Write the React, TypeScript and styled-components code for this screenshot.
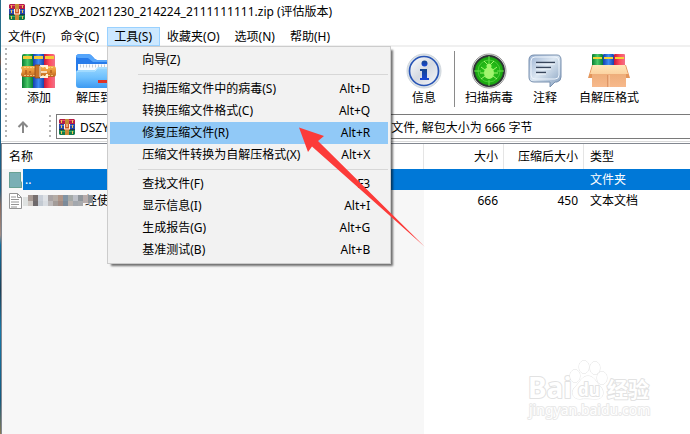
import React from "react";
import styled, { createGlobalStyle, css } from "styled-components";

const archiveName = "DSZYXB_20211230_214224_2111111111.zip";

const GlobalStyle = createGlobalStyle`
  * { box-sizing: border-box; }
  body { margin: 0; background: #fff; }
  body, button, input, table {
    font-family: "Noto Sans", "Noto Sans CJK SC", sans-serif;
    font-size: 12px;
    line-height: 16px;
    color: #000;
  }
  button { border: 0; padding: 0; background: none; white-space: nowrap; }
`;

const Desktop = styled.div`
  position: relative;
  display: flex;
  min-height: 100vh;
  overflow: hidden;
`;

const Wallpaper = styled.div`
  flex: none;
  width: 1px;
  background: linear-gradient(#2a6f8c 0 50px, #7c5a4c 62px, #1b5f86 72px 190px, #8a6a5c 205px, #a08c84 235px, #0f6fa0 245px, #1b4058 290px, #1878a8 330px, #135a80 400px, #8a7a50);
`;

const AppWindow = styled.main`
  flex: 1;
  min-width: 0;
  display: flex;
  flex-direction: column;
  background: #fff;
`;

const TitleBar = styled.header`
  display: flex;
  align-items: center;
  gap: 5px;
  height: 27px;
  padding: 0 8px 4px;
`;

const Title = styled.h1`
  margin: 0;
  font-size: 12px;
  font-weight: 400;
  white-space: nowrap;
`;

const MenuBar = styled.nav`
  display: flex;
  height: 19px;
  box-shadow: inset 0 -1px #f0f0f0;
`;

const MenuSlot = styled.div`
  position: relative;
`;

const MenuTitle = styled.button<{ $open?: boolean }>`
  height: 19px;
  padding: 0 8px 0 7px;
  ${(p) =>
    p.$open &&
    css`
      background: #cce8ff;
      box-shadow: inset 0 0 0 1px #99d1ff;
    `}
`;

const DropDown = styled.div`
  position: absolute;
  z-index: 2;
  top: 100%;
  left: 0;
  width: 284px;
  padding: 2px;
  background: #f2f2f2;
  border: 1px solid #ccc;
  box-shadow: 3px 3px 2px -1px rgba(0, 0, 0, 0.55);
`;

const MenuItem = styled.button<{ $active?: boolean }>`
  display: flex;
  align-items: center;
  justify-content: space-between;
  width: 100%;
  height: 22px;
  padding: 0 18px 0 32px;
  background: ${(p) => (p.$active ? "#91c9f7" : "transparent")};
`;

const MenuRule = styled.hr`
  height: 1px;
  margin: 3px 0 3px 28px;
  border: 0;
  background: #d7d7d7;
`;

const ToolBar = styled.div`
  display: flex;
  height: 66px;
  padding: 0 4px;
  border-top: 1px solid #f0f0f0;
`;

const Grip = styled.div`
  flex: none;
  width: 2px;
  margin: 1px 0 2px;
  background: repeating-linear-gradient(#b4b4b4 0 2px, transparent 2px 5px);
`;

const ToolButton = styled.button<{ $width: number }>`
  display: flex;
  flex: none;
  flex-direction: column;
  align-items: center;
  gap: 1px;
  width: ${(p) => p.$width}px;
  padding-top: 6px;
`;

const ToolGroup = styled.div`
  display: flex;
  flex: none;
  width: 390px;
  padding-left: 5px;
`;

const ToolRule = styled.div`
  flex: none;
  width: 1px;
  margin: 4px 4px 5px 3px;
  background: #8a8a8a;
`;

const AddressRow = styled.div`
  display: flex;
  height: 30px;
  padding: 2px 0 2px 4px;
  border-bottom: 1px solid #dadada;
`;

const UpButton = styled.button`
  display: flex;
  align-items: center;
  justify-content: center;
  width: 42px;
  padding-right: 10px;
`;

const AddressField = styled.label`
  display: flex;
  flex: 1;
  align-items: center;
  gap: 5px;
  margin-left: 5px;
  padding: 0 2px;
  border: 1px solid #7a7a7a;
  border-right: 0;
`;

const AddressInput = styled.input`
  flex: 1;
  min-width: 0;
  padding: 2px 0 0;
  border: 0;
  outline: 0;
`;

const FileList = styled.section`
  flex: 1;
  margin-top: 1px;
  border-top: 1px solid #828790;
  border-left: 1px solid #828790;
  background: linear-gradient(90deg, #f7f7f7 422px, #fff 422px);
`;

const FileTable = styled.table`
  width: 100%;
  table-layout: fixed;
  border-collapse: collapse;
`;

const Column = styled.col<{ $width?: number }>`
  width: ${(p) => (p.$width ? p.$width + "px" : "auto")};
`;

const HeadCell = styled.th<{ $numeric?: boolean }>`
  height: 25px;
  padding: 0 6px;
  font-weight: 400;
  text-align: ${(p) => (p.$numeric ? "right" : "left")};
  background: linear-gradient(#e5e5e5, #e5e5e5) right top / 1px 100% no-repeat #fff;
  &:first-child { padding-left: 7px; }
  &:last-child { background: #fff; }
`;

const Cell = styled.td<{ $numeric?: boolean; $selected?: boolean }>`
  height: 21px;
  padding: 0 6px;
  text-align: ${(p) => (p.$numeric ? "right" : "left")};
  ${(p) => p.$selected && css`background: #0078d7; color: #fff;`}
`;

const NameCell = styled.td`
  height: 21px;
  padding: 0;
`;

const NameContent = styled.div<{ $selected?: boolean }>`
  display: flex;
  align-items: center;
  height: 21px;
  padding-left: 7px;
  ${(p) => p.$selected && css`background: linear-gradient(90deg, #f7f7f7 21px, #0078d7 21px); color: #fff;`}
`;

const NameText = styled.span`
  padding-left: 2px;
`;

const Mosaic = styled.svg`
  position: relative;
  flex: none;
  margin-right: -12px;
`;

const Pointer = styled.svg`
  position: absolute;
  z-index: 3;
  left: 298px;
  top: 126px;
  pointer-events: none;
`;

const Watermark = styled.svg`
  position: absolute;
  right: 38px;
  bottom: 12px;
  pointer-events: none;
`;

const BooksMark = () => (
  <svg width="16" height="16" viewBox="0 0 16 16" aria-hidden="true">
    <path d="M1 0h14l1 1v4H1L0 4V1z" fill="#b51d48" />
    <path d="M1 1h14v1H1z" fill="#e8506f" />
    <path d="M0 5h16v5H0z" fill="#2848a8" />
    <path d="M1 6h14v1H1z" fill="#5377d8" />
    <path d="M0 11h16v4l-1 1H1l-1-1z" fill="#13784a" />
    <path d="M1 12h14v1H1z" fill="#36ac69" />
    <path d="M0 10h16v1H0z" fill="#26324f" />
    <path d="M2 1h1v3H2zM13 1h1v3h-1zM2 6h1v3H2zM13 6h1v3h-1zM2 12h1v3H2zM13 12h1v3h-1z" fill="#f1c84b" />
    <path d="M6 0h4v5H6zM6 11h4v5H6z" fill="#c98b35" />
    <path d="M5 5h6v6H5z" fill="#cf5a29" />
    <path d="M5.500 5v5h5V5" fill="none" stroke="#fff6e0" />
    <path d="M8 5v3" stroke="#fff6e0" />
  </svg>
);

const AddIcon = () => (
  <svg width="36" height="36" viewBox="0 0 36 36" aria-hidden="true">
    <defs>
      <linearGradient id="addGreen"><stop stopColor="#087b31" /><stop offset=".5" stopColor="#48c967" /><stop offset="1" stopColor="#087c35" /></linearGradient>
      <linearGradient id="addBlue"><stop stopColor="#153eb0" /><stop offset=".5" stopColor="#3e8bf2" /><stop offset="1" stopColor="#1742ad" /></linearGradient>
      <linearGradient id="addRed"><stop stopColor="#c9163b" /><stop offset=".5" stopColor="#ff4c5c" /><stop offset="1" stopColor="#f0708a" /></linearGradient>
      <linearGradient id="belt" x2="0" y2="1"><stop stopColor="#f4b64e" /><stop offset=".45" stopColor="#e8963a" /><stop offset="1" stopColor="#b8621d" /></linearGradient>
    </defs>
    <path d="M1 3q0-2 2-2h9v34H1z" fill="url(#addGreen)" />
    <path d="M12 1h11v34H12z" fill="url(#addBlue)" />
    <path d="M23 1h9q2 0 2 2v32H23z" fill="url(#addRed)" />
    <path d="M2 3h9v3H2zM13 3h9v3h-9zM24 3h9v3h-9z" fill="#f4cb38" />
    <path d="M3 13h29q3 0 3 3v5q0 3-3 3H3q-3 0-3-3 2-4 0-6 0-2 3-2z" fill="url(#belt)" />
    <path d="M3 14.500h29M3 22.500h29" stroke="#ffd98a" strokeWidth=".8" strokeDasharray="2 1" />
    <path d="M14 12h5v13h-5z" fill="#c87328" stroke="#8a4716" strokeWidth=".8" />
    <path d="M19 13h7v3M19 24h7v-3" fill="none" stroke="#fff1d9" strokeWidth="2" />
    <path d="M19 13v11" stroke="#dcc7a6" strokeWidth="1.500" />
    <path d="M20 19h6" stroke="#fbf6e9" strokeWidth="1.500" />
    <path d="M5 17v4M9 18v2M30 17v3" stroke="#b75f1c" strokeWidth="1.500" />
  </svg>
);

const ExtractIcon = () => (
  <svg width="36" height="36" viewBox="0 0 36 36" aria-hidden="true">
    <defs>
      <linearGradient id="folder" x2="0" y2="1"><stop stopColor="#9ad8ff" /><stop offset=".5" stopColor="#6fc0fd" /><stop offset="1" stopColor="#3c9af2" /></linearGradient>
    </defs>
    <path d="M0 4q0-3 4-3h8q3 0 5 3t4 3h15v25H0z" fill="#277bea" />
    <path d="M0 4q0-3 4-3h8q3 0 5 3t4 3h15v2H17L12 5H2z" fill="#55a5fb" />
    <path d="M2 11h34v10H2z" fill="#f8fbff" />
    <path d="M4 13h32" stroke="#c3cbd7" strokeWidth="3" strokeDasharray="1 2" />
    <path d="M0 19q0-2 3-2h16l3-3h14v18q0 3-3 3H3q-3 0-3-3z" fill="url(#folder)" />
    <path d="M1 19q1-1 3-1h15l3-3h14" fill="none" stroke="#b9e6ff" />
    <path d="M22 27h14v3H22z" fill="#df3427" />
  </svg>
);

const InfoIcon = () => (
  <svg width="36" height="36" viewBox="0 0 36 36" aria-hidden="true">
    <defs>
      <linearGradient id="silver" x2="1" y2="1"><stop stopColor="#fff" /><stop offset=".5" stopColor="#d5d9e1" /><stop offset="1" stopColor="#f7f8fb" /></linearGradient>
      <linearGradient id="infoBlue" x2="0" y2="1"><stop stopColor="#16458c" /><stop offset="1" stopColor="#1947d8" /></linearGradient>
    </defs>
    <circle cx="18" cy="18" r="17" fill="#dce3e9" stroke="#cfd6dc" />
    <circle cx="18" cy="18" r="14.5" fill="url(#silver)" stroke="#2854b5" strokeWidth="1.7" />
    <circle cx="18.5" cy="10.5" r="3" fill="url(#infoBlue)" />
    <path d="M14 16h7v9h2v2h-9v-2h2v-7h-2z" fill="url(#infoBlue)" />
  </svg>
);

const VirusIcon = () => (
  <svg width="36" height="36" viewBox="0 0 36 36" aria-hidden="true">
    <defs><radialGradient id="radar"><stop stopColor="#2fd01f" /><stop offset="1" stopColor="#18a00f" /></radialGradient></defs>
    <circle cx="18" cy="18" r="17" fill="#ececec" stroke="#999" />
    <circle cx="18" cy="18" r="15" fill="url(#radar)" stroke="#2e3335" strokeWidth="2" />
    <circle cx="18" cy="18" r="11" fill="none" stroke="#52d63d" strokeWidth=".8" />
    <path d="M18 3v7M18 27v6M3 18h7M26 18h7" stroke="#69e34c" />
    <ellipse cx="18" cy="20" rx="5" ry="6" fill="#a1f56d" />
    <circle cx="18" cy="13" r="2.500" fill="#a1f56d" />
    <path d="M14 17l-4-3M22 17l4-3M13 20H9M23 20h4M14 23l-4 3M22 23l4 3M16 11l-3-3M20 11l3-3" stroke="#a1f56d" />
  </svg>
);

const CommentIcon = () => (
  <svg width="36" height="36" viewBox="0 0 36 36" aria-hidden="true">
    <defs><linearGradient id="bubble" x2="1" y2="1"><stop stopColor="#9bb2d2" /><stop offset=".45" stopColor="#dce7f2" /><stop offset="1" stopColor="#829dbd" /></linearGradient></defs>
    <path d="M7 2h23q4 0 4 5v17q0 4-4 5h-2l-5 5v-5H7q-5 0-5-5V7q0-5 5-5z" fill="url(#bubble)" stroke="#7890af" />
    <path d="M8 4h20q4 0 4 4v14q0 4-4 4H8q-4 0-4-4V8q0-4 4-4z" fill="none" stroke="#edf4fc" />
    <path d="M9 9.500h19M9 14.500h15M9 19.500h10" stroke="#38465b" strokeWidth="1.500" />
    <path d="M9 11h19M9 16h15M9 21h10" stroke="#f2f7fc" />
  </svg>
);

const SfxIcon = () => (
  <svg width="42" height="36" viewBox="0 0 42 36" aria-hidden="true">
    <defs>
      <linearGradient id="box" x2="0" y2="1"><stop stopColor="#e7a66e" /><stop offset="1" stopColor="#f7b98c" /></linearGradient>
      <linearGradient id="flap" x2="0" y2="1"><stop stopColor="#ffe6b8" /><stop offset="1" stopColor="#fbd3a2" /></linearGradient>
    </defs>
    <rect x="4" y="1" width="11" height="14" rx="1" fill="url(#addGreen)" />
    <rect x="15" y="1" width="11" height="14" rx="1" fill="url(#addBlue)" />
    <rect x="26" y="1" width="11" height="14" rx="1" fill="url(#addRed)" />
    <path d="M5 4h9v2H5zM16 4h9v2h-9zM27 4h9v2h-9z" fill="#f4d537" />
    <path d="M4 12h34v22H4z" fill="url(#box)" />
    <path d="M4 12L0 25h4zM38 12l4 13h-4z" fill="#e4965b" />
    <path d="M5 12h32l3 9H2z" fill="url(#flap)" />
    <path d="M20 22v12" stroke="#c97747" />
    <path d="M21 22v12" stroke="#ffd1a9" />
  </svg>
);

const UpIcon = () => (
  <svg width="12" height="14" viewBox="0 0 12 14" aria-hidden="true">
    <path d="M6 13V3M1.5 7L6 2.5 10.5 7" fill="none" stroke="#888" strokeWidth="2" />
  </svg>
);

const FolderIcon = () => (
  <svg width="14" height="16" viewBox="0 0 14 16" aria-hidden="true">
    <path d="M0 0h12v9l1 1v6H0z" fill="#7aafb5" />
    <path d="M.5.5h11v9l1 1v5H.5z" fill="none" stroke="#68a194" />
  </svg>
);

const DocumentIcon = () => (
  <svg width="14" height="16" viewBox="0 0 14 16" aria-hidden="true">
    <path d="M.5.5h8l4 4v11H.5z" fill="#fff" stroke="#949494" />
    <path d="M8.5.5v4h4M2 4h5M2 6.5h8M2 9h8M2 11.5h8M2 14h6" fill="none" stroke="#949494" />
  </svg>
);

const upperTiles = ["#dfe2e1", "#a79a94", "#77706f", "#c9cfd8", "#dfe2e6", "#a9a4a5", "#b5ada7", "#af978a", "#8194a4", "#a5aaa8", "#bdc0c7", "#91979c", "#b8adac", "#8f9396"];
const lowerTiles = ["#dfe2e1", "#cfc9c4", "#6f6a6c", "#c3cad2", "#d9dde2", "#bdbabb", "#a39c99", "#a28c84", "#7c8b9a", "#b9b2ad", "#a3a8ae", "#a9abae"];

const MosaicName = () => (
  <Mosaic width="74" height="12" viewBox="0 0 74 12" aria-hidden="true">
    {upperTiles.map((fill, i) => (
      <rect key={i} x={i * 5} y={i === 0 ? 2 : 0} width="5" height={i > 11 ? 8 : 6} fill={fill} />
    ))}
    {lowerTiles.map((fill, i) => (
      <rect key={i} x={i * 5} y="6" width="5" height="5" fill={fill} />
    ))}
  </Mosaic>
);

const menuEntries: (null | [string, string])[] = [
  ["向导(Z)", ""],
  null,
  ["扫描压缩文件中的病毒(S)", "Alt+D"],
  ["转换压缩文件格式(C)", "Alt+Q"],
  ["修复压缩文件(R)", "Alt+R"],
  ["压缩文件转换为自解压格式(X)", "Alt+X"],
  null,
  ["查找文件(F)", "F3"],
  ["显示信息(I)", "Alt+I"],
  ["生成报告(G)", "Alt+G"],
  ["基准测试(B)", "Alt+B"],
];

const ToolsMenu = () => (
  <DropDown role="menu">
    {menuEntries.map((entry, i) =>
      entry ? (
        <MenuItem key={i} role="menuitem" $active={entry[1] === "Alt+R"}>
          <span>{entry[0]}</span>
          <span>{entry[1]}</span>
        </MenuItem>
      ) : (
        <MenuRule key={i} />
      )
    )}
  </DropDown>
);

const menus = ["文件(F)", "命令(C)", "工具(S)", "收藏夹(O)", "选项(N)", "帮助(H)"];

export default function App() {
  return (
    <Desktop>
      <GlobalStyle />
      <Wallpaper />
      <AppWindow>
        <TitleBar>
          <BooksMark />
          <Title>{archiveName} (评估版本)</Title>
        </TitleBar>
        <MenuBar>
          {menus.map((name) => {
            const open = name === "工具(S)";
            return (
              <MenuSlot key={name}>
                <MenuTitle $open={open} aria-expanded={open}>{name}</MenuTitle>
                {open && <ToolsMenu />}
              </MenuSlot>
            );
          })}
        </MenuBar>
        <ToolBar>
          <Grip />
          <ToolGroup>
            <ToolButton $width={54}><AddIcon />添加</ToolButton>
            <ToolButton $width={56}><ExtractIcon />解压到</ToolButton>
          </ToolGroup>
          <ToolButton $width={54}><InfoIcon />信息</ToolButton>
          <ToolRule />
          <ToolButton $width={60}><VirusIcon />扫描病毒</ToolButton>
          <ToolButton $width={52}><CommentIcon />注释</ToolButton>
          <ToolButton $width={76}><SfxIcon />自解压格式</ToolButton>
        </ToolBar>
        <AddressRow>
          <Grip />
          <UpButton aria-label="向上"><UpIcon /></UpButton>
          <Grip />
          <AddressField>
            <BooksMark />
            <AddressInput aria-label="地址" readOnly value={archiveName + " - ZIP \u3000压缩文件, 解包大小为 666 字节"} />
          </AddressField>
        </AddressRow>
        <FileList>
          <FileTable>
            <colgroup>
              <Column $width={422} />
              <Column $width={80} />
              <Column $width={80} />
              <Column />
            </colgroup>
            <thead>
              <tr>
                <HeadCell>名称</HeadCell>
                <HeadCell $numeric>大小</HeadCell>
                <HeadCell $numeric>压缩后大小</HeadCell>
                <HeadCell>类型</HeadCell>
              </tr>
            </thead>
            <tbody>
              <tr>
                <NameCell>
                  <NameContent $selected><FolderIcon /><NameText>..</NameText></NameContent>
                </NameCell>
                <Cell $selected $numeric />
                <Cell $selected $numeric />
                <Cell $selected>文件夹</Cell>
              </tr>
              <tr>
                <NameCell>
                  <NameContent><DocumentIcon /><MosaicName />经使</NameContent>
                </NameCell>
                <Cell $numeric>666</Cell>
                <Cell $numeric>450</Cell>
                <Cell>文本文档</Cell>
              </tr>
            </tbody>
          </FileTable>
        </FileList>
      </AppWindow>
      <Pointer width="128" height="123" viewBox="0 0 128 123" aria-hidden="true">
        <path d="M1 1.500L26 10L20 15L127 121L14 20.500L10 26z" fill="#fc3b39" />
      </Pointer>
      <Watermark width="126" height="64" viewBox="0 0 126 64" aria-hidden="true">
        <g fill="#fff" stroke="#e2e2e2" strokeWidth="2" paintOrder="stroke" strokeLinejoin="round" fontFamily="'Noto Sans', 'Noto Sans CJK SC', sans-serif" fontWeight="700">
          <text x="2" y="40" fontSize="28">Bai</text>
          <ellipse cx="49" cy="18" rx="5" ry="6.500" strokeWidth="1" />
          <ellipse cx="58" cy="9" rx="5" ry="6.500" strokeWidth="1" />
          <ellipse cx="69" cy="10" rx="5" ry="6.500" strokeWidth="1" />
          <ellipse cx="76" cy="20" rx="5" ry="6.500" strokeWidth="1" />
          <path d="M62 18c6 0 8 6 12 10 5 5 4 13-4 13-4 0-12-1-16 0-8 0-10-8-4-13 4-4 6-10 12-10z" strokeWidth="1" />
          <text x="52" y="38" fontSize="17">du</text>
          <text x="81" y="39" fontSize="21">经验</text>
          <text x="3" y="57" fontSize="14" fontWeight="400" stroke="#e9e9e9">jingyan.baidu.com</text>
        </g>
      </Watermark>
    </Desktop>
  );
}
